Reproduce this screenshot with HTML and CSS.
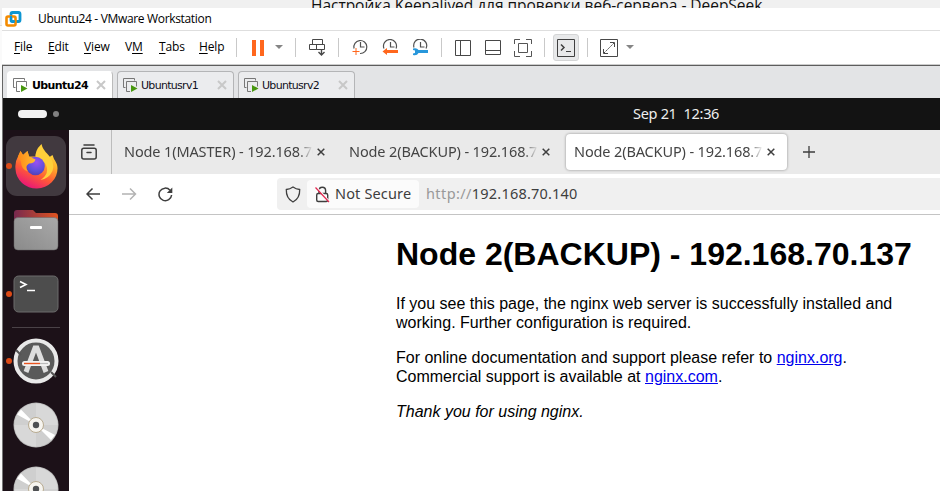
FILE: index.html
```html
<!DOCTYPE html>
<html lang="en">
<head>
<meta charset="utf-8">
<title>Ubuntu24 - VMware Workstation</title>
<link rel="stylesheet" href="styles.css">
</head>
<body>
<svg width="0" height="0" class="defs">
  <defs>
    <linearGradient id="fox" x1="0.8" y1="0" x2="0.3" y2="1"><stop offset="0" stop-color="#ffe947"/><stop offset=".35" stop-color="#ffae28"/><stop offset=".65" stop-color="#ff5b35"/><stop offset="1" stop-color="#e8127c"/></linearGradient>
    <radialGradient id="globe" cx=".55" cy=".3" r=".8"><stop offset="0" stop-color="#9a50f2"/><stop offset=".6" stop-color="#5b50d8"/><stop offset="1" stop-color="#5537a5"/></radialGradient>
    <linearGradient id="ear"><stop offset="0" stop-color="#ff8a18"/><stop offset="1" stop-color="#ffbd32"/></linearGradient>
    <linearGradient id="folder"><stop offset="0" stop-color="#77294f"/><stop offset="1" stop-color="#e05420"/></linearGradient>
    <linearGradient id="front" x1="0" y1="1" x2="1" y2="0"><stop offset="0" stop-color="#8a8a8a"/><stop offset="1" stop-color="#a9a9a9"/></linearGradient>
    <symbol id="vmtab" viewBox="0 0 15 15"><path d="M2.500 9.500H.5V.5h11v2" fill="none" stroke="#777"/><path d="M7 13.500H3.500V3.500h10v5" fill="none" stroke="#777"/><path d="M8 7l6.500 3.500L8 14z" fill="#47960f"/></symbol>
    <symbol id="close" viewBox="0 0 10 10"><path d="M1 1l8 8M9 1L1 9" fill="none" stroke="#c8c8c8" stroke-width="2"/></symbol>
    <symbol id="fxclose" viewBox="0 0 8 8"><path d="M.7.700l6.600 6.600M7.300.700L.7 7.300" fill="none" stroke="#3e3e3e" stroke-width="1.500"/></symbol>
    <symbol id="caret" viewBox="0 0 8 4"><path d="M0 0h8L4 4z" fill="#858585"/></symbol>
    <symbol id="disc" viewBox="0 0 46 46">
      <circle cx="23" cy="23" r="22.500" fill="#b7b7b7"/><circle cx="23" cy="23" r="21.700" fill="#cfcfcf"/>
      <path d="M23 23V1.500A21.500 21.500 0 0 1 44.500 23zM23 23v21.500A21.500 21.500 0 0 1 1.500 23z" fill="#d8d8d8"/>
      <path d="M23 23L4 12.500l4-5zM23 23l15 15 4-5z" fill="#fff"/>
      <circle cx="23" cy="23" r="7.500" fill="#f6f4ef" stroke="#b8ab91"/><circle cx="23" cy="23" r="3.200" fill="#4e5053"/>
    </symbol>
  </defs>
</svg>
<div class="behind"><span>Настройка Keepalived для проверки веб-сервера - DeepSeek</span></div>
<div class="window">
  <header class="title">
    <svg width="18" height="17" viewBox="0 0 18 17"><rect x="6" y="2.500" width="9" height="9" rx="1.500" fill="none" stroke="#0e96d2" stroke-width="2.800"/><rect x="1.500" y="6.500" width="9" height="9" rx="1.500" fill="none" stroke="#f38b00" stroke-width="2.600"/><path d="M6 6V10.500q0 1 1 1h3" fill="none" stroke="#0e96d2" stroke-width="2"/></svg>
    <span>Ubuntu24 - VMware Workstation</span>
  </header>
  <nav class="toolbar">
    <span><u>F</u>ile</span><span><u>E</u>dit</span><span><u>V</u>iew</span><span>V<u>M</u></span><span><u>T</u>abs</span><span><u>H</u>elp</span>
    <i class="sep"></i>
    <svg width="12" height="16"><path d="M0 0h4v16H0zM8 0h4v16H8z" fill="#ff671d"/></svg>
    <svg width="8" height="4" class="down"><use href="#caret"/></svg>
    <i class="sep"></i>
    <svg width="17" height="17" fill="none" stroke="#474747"><path d="M3.500.500h10v5h-10zM.5 5.500h7v5h-7zM7.500 10.500v-5h8v5z"/><path d="M12.500 10v6M9.500 13l3 3 3-3" stroke-width="1.400"/></svg>
    <i class="sep"></i>
    <svg width="16" height="17"><path d="M2 9.500A6.500 6.500 0 1 1 8 14.500M8.500 3v5h4" fill="none" stroke="#515151" stroke-width="1.200"/><path d="M.5 12.500h7M4 9v7" stroke="#ff671d"/></svg>
    <svg width="17" height="17"><path d="M2 9.500A6.500 6.500 0 1 1 14 9.500M8.500 3v5h4" fill="none" stroke="#515151" stroke-width="1.200"/><path d="M5 9v2h11v3H5v2L.5 12.500z" fill="#ff671d"/></svg>
    <svg width="17" height="17"><path d="M2 8.500A6.500 6.500 0 1 1 14 9.500M8.500 3v5h4" fill="none" stroke="#515151" stroke-width="1.200"/><path d="M1 9.500q4-1 5.500 1.500H16v3H6.500q-1.500 3-5.500 2v-1.500l2-.5v-2.500l-2-.5z" fill="#2797db"/></svg>
    <i class="sep"></i>
    <svg width="16" height="16" fill="none" stroke="#474747"><path d="M.5.500h15v15H.5zM5.500.500v15"/></svg>
    <svg width="16" height="16" fill="none" stroke="#474747"><path d="M.5.500h15v14H.5zM.5 10.500h15"/></svg>
    <svg width="18" height="18" fill="none" stroke="#555"><path d="M.5 5V.500H6M12 .500h5.500V5M.5 12v5.500H6M12 17.500h5.500V12M4.500 4.500h9v9h-9z"/></svg>
    <i class="sep"></i>
    <span class="pressed"><svg width="18" height="18" fill="none" stroke="#404040"><path d="M.5.500h17v17H.5zM9 12.500h5"/><path d="M4 5.500l3 3-3 3" stroke-width="1.500"/></svg></span>
    <i class="sep"></i>
    <svg width="18" height="18" fill="none" stroke="#484848"><path d="M.5.500h17v17H.5zM10 3.500h4.500V8M3.500 10v4.500H8"/><path d="M4 14L14 4" stroke-dasharray="2 1"/></svg>
    <svg width="8" height="4" class="down"><use href="#caret"/></svg>
  </nav>
  <div class="vmtabs">
    <div class="vmtab on"><svg width="15" height="15"><use href="#vmtab"/></svg><span>Ubuntu24</span><svg width="10" height="10"><use href="#close"/></svg></div>
    <div class="vmtab"><svg width="15" height="15"><use href="#vmtab"/></svg><span>Ubuntusrv1</span><svg width="10" height="10"><use href="#close"/></svg></div>
    <div class="vmtab"><svg width="15" height="15"><use href="#vmtab"/></svg><span>Ubuntusrv2</span><svg width="10" height="10"><use href="#close"/></svg></div>
  </div>
  <div class="guest">
    <div class="topbar"><i class="pill"></i><i class="ws"></i><span>Sep 21&nbsp; 12:36</span></div>
    <div class="desk">
      <aside class="dock">
        <div class="app focus"><i class="dot"></i>
          <svg width="44" height="46" viewBox="0 0 44 46">
            <path d="M4 13.500L6.500 8l2.500 4 4.500-4 1.500 5.500 8 0q0-4 4.500-10l2 5 6 5.500 3-2 1.500 4q3.500 5 3.500 9A20.500 19.500 0 0 1 1.500 26q-.8-7 2.500-12.500z" fill="url(#fox)"/>
            <path d="M27.500 1q1 5 6 10 8 8 5 17-4 8-12 9 10-7 5-16-3-4-10-4.500Q20 8 27.500 1z" fill="#ffd03a"/>
            <circle cx="21.500" cy="23" r="9.300" fill="url(#globe)"/>
            <path d="M4 13.500L6.500 8l2.500 4 4.500-4 1.500 5.500 6.500 3q-1 4-6.500 4-5 3-1 8-7-2-7-10z" fill="url(#ear)"/>
          </svg></div>
        <div class="app"><svg width="46" height="42" viewBox="0 0 46 42"><path d="M1 10V4q0-3 3-3h16l3 3h19q3 0 3 3v12H1z" fill="url(#folder)"/><rect x="1" y="8.500" width="44" height="32.500" rx="4" fill="url(#front)" stroke="#666" stroke-width=".5"/><rect x="17" y="17" width="12" height="3" rx="1" fill="#fff"/></svg></div>
        <div class="app"><i class="dot"></i><svg width="46" height="38" viewBox="0 0 46 38"><rect x="1" y="1" width="44" height="36" rx="4.500" fill="#4d4d4d" stroke="#6c6c6c"/><path d="M7 6.500l6 3-6 3M14 15.500h8" fill="none" stroke="#fff" stroke-width="1.600"/></svg></div>
        <i class="line"></i>
        <div class="app"><i class="dot"></i><svg width="46" height="46" viewBox="0 0 46 46"><circle cx="23" cy="23" r="20.500" fill="#5a5a5a" stroke="#e9e9e9" stroke-width="4"/><path d="M3 12l5 5M38 34l5 5" stroke="#555" stroke-width="2"/><path d="M13 34l9-24h2l9 24" fill="none" stroke="#dedede" stroke-width="5"/><rect x="9" y="23" width="28" height="5" rx="2.500" fill="#f2f2f2"/><path d="M11 25.500h16" stroke="#e95420" stroke-width="1.400"/><path d="M27 25.500h8" stroke="#bbb" stroke-width="1.200"/></svg></div>
        <div class="app"><svg width="46" height="46"><use href="#disc"/></svg></div>
        <div class="app"><svg width="46" height="46"><use href="#disc"/></svg></div>
      </aside>
      <main class="browser">
        <div class="tabs">
          <div class="recent"><svg width="16" height="16" fill="none" stroke="#3e3e3e" stroke-width="1.500"><rect x=".8" y="4.200" width="14.400" height="10.800" rx="2"/><path d="M3 .900h10M6 8.500h4" stroke-linecap="round"/></svg></div>
          <div class="tab"><span>Node 1(MASTER) - 192.168.70</span><svg width="8" height="8"><use href="#fxclose"/></svg></div>
          <div class="tab"><span>Node 2(BACKUP) - 192.168.70</span><svg width="8" height="8"><use href="#fxclose"/></svg></div>
          <div class="tab active"><span>Node 2(BACKUP) - 192.168.70</span><svg width="8" height="8"><use href="#fxclose"/></svg></div>
          <svg class="plus" width="12" height="12"><path d="M6 0v12M0 6h12" stroke="#3e3e3e" stroke-width="1.300"/></svg>
        </div>
        <div class="nav">
          <svg width="15" height="14" fill="none" stroke="#3e3e3e" stroke-width="1.500"><path d="M14 7H1.200M6.500 1.500L1 7l5.500 5.500"/></svg>
          <svg width="15" height="14" fill="none" stroke="#b3b3b3" stroke-width="1.500"><path d="M0 7h13.300M8 1.500L13.500 7 8 12.500"/></svg>
          <svg width="15" height="15" fill="none" stroke="#3e3e3e" stroke-width="1.500"><path d="M13.600 8A6.300 6.300 0 1 1 12 3.200"/><path d="M14.300.500v5.500H8.800z" fill="#3e3e3e" stroke="none"/></svg>
          <div class="url">
            <svg width="16" height="17" fill="none" stroke="#3e3e3e" stroke-width="1.300"><path d="M8 1q3 2.300 6.700 2.500.3 9-6.700 12.500Q1 12.500 1.300 3.500 5 3.300 8 1z"/></svg>
            <div class="ident"><svg width="15" height="17" fill="none" stroke="#3e3e3e" stroke-width="1.400"><rect x="1.700" y="7.500" width="11" height="8" rx="1.500"/><path d="M4 7.500V4.500a3.300 3.300 0 0 1 6.600 0v3"/><path d="M1 .5l13.500 15" stroke="#fbfbfb" stroke-width="1.500"/><path d="M.5 1.500l13.500 14.500" stroke="#e22850" stroke-width="1.200"/></svg><span>Not Secure</span></div>
            <span class="addr"><b>http://</b>192.168.70.140</span>
          </div>
        </div>
        <article class="page">
          <h1>Node 2(BACKUP) - 192.168.70.137</h1>
          <p>If you see this page, the nginx web server is successfully installed and<br>working. Further configuration is required.</p>
          <p>For online documentation and support please refer to <a href="#">nginx.org</a>.<br>Commercial support is available at <a href="#">nginx.com</a>.</p>
          <p><em>Thank you for using nginx.</em></p>
        </article>
      </main>
    </div>
  </div>
</div>
</body>
</html>
```
FILE: styles.css
```css
* { box-sizing: border-box; }
body { margin: 0; width: 940px; height: 491px; overflow: hidden; background: linear-gradient(#f0f0f0 25px, #dcdcdc 25px, #dcdcdc 26px, #fafafa 26px); }
svg { display: block; flex: none; }
i { display: block; flex: none; }
.defs { position: absolute; }
.behind { height: 8px; padding-left: 311px; overflow: hidden; font: 15.5px/20px "Open Sans", sans-serif; color: #111; white-space: nowrap; background: #f0f0f0; }
.behind span { display: block; margin-top: -5px; letter-spacing: -.03px; }
.window { margin-left: 2px; height: 483px; background: #fff; }
.title { height: 23px; border-bottom: 1px solid #dedede; display: flex; padding: 2px 0 0 3px; font: 12px/17px "Open Sans", sans-serif; color: #000; }
.title span { margin-left: 15px; letter-spacing: -.33px; }
.toolbar { height: 34px; border-bottom: 1px solid #ccc; padding-left: 12px; display: grid; align-items: center; grid-template-columns: 34px 36px 41px 34px 40px 37px 16px 23px 20px 14px 29px 14px 30px 30px 29px 14px 30px 29px 30px 9px 34px 13px 26px 8px; font: 12px/16px "Open Sans", sans-serif; letter-spacing: -.15px; }
.toolbar > span:not(.pressed) { margin-top: -1px; }
.toolbar u { text-underline-offset: 2px; }
.sep { width: 1px; height: 19px; background: #c9c9c9; }
.down { margin-top: -1px; }
.pressed { width: 26px; height: 27px; border: 1px solid #d4d5d6; border-radius: 3px; background: #e8e9ea; display: grid; place-items: center; }
.vmtabs { height: 33px; border-top: 1px solid #5d5d5d; border-left: 1px solid #666; background: #e3e4e6; display: flex; gap: 4px; padding: 5px 0 0 4px; }
.vmtab { width: 117px; height: 27px; display: flex; align-items: center; border: 1px solid #b4b5b7; border-bottom: 0; border-radius: 4px 4px 0 0; background: #ebecee; padding: 0 6px 0 5px; font: 11px/14px "DejaVu Sans", sans-serif; color: #101020; }
.vmtab span { margin: 1px auto 0 3px; letter-spacing: -.7px; }
.vmtab.on { width: 106px; background: #fff; border-color: #fff #bbb #fff #fff; font-weight: bold; color: #000; }
.vmtab.on span { margin-left: 4px; letter-spacing: -.6px; }
.guest { border-left: 1px solid #777; }
.topbar { height: 32px; background: #131313; display: flex; align-items: center; padding-left: 15px; font: 14.5px/20px "Noto Sans", sans-serif; color: #eee; }
.pill { width: 29px; height: 8px; border-radius: 4px; background: #f2f2f2; }
.ws { width: 6px; height: 6px; border-radius: 50%; background: #808080; margin-left: 6px; }
.topbar span { margin: -3px 0 0 574px; letter-spacing: -.3px; }
.desk { display: flex; height: 361px; }
.dock { width: 66px; flex: none; overflow: hidden; background: #1c1118; }
.app { position: relative; height: 64px; display: grid; place-items: center; }
.app.focus { width: 60px; height: 60px; margin: 6px 0 2px 3px; border-radius: 11px; background: #41393f; }
.dot { position: absolute; left: 3px; top: 29px; width: 6px; height: 6px; border-radius: 50%; background: #dc4a16; }
.focus .dot { left: 0; top: 27px; }
.line { width: 48px; height: 1px; margin: 1px 9px; background: #4a4247; }
.browser { flex: 1; min-width: 0; background: #fff; }
.tabs { height: 44px; background: #eaeaea; display: flex; align-items: center; font: 14.5px/20px "Noto Sans", sans-serif; color: #444; }
.recent { width: 43px; height: 44px; border-right: 1px solid #bcbcbc; padding: 14px 0 0 12px; }
.tab { width: 221px; height: 36px; margin-left: 4px; padding-left: 8px; border-radius: 4px; display: flex; align-items: center; white-space: nowrap; }
.tab span { width: 189px; overflow: hidden; margin: -2px 4px 0 0; letter-spacing: -.13px; -webkit-mask-image: linear-gradient(90deg, #000 174px, transparent 189px); mask-image: linear-gradient(90deg, #000 174px, transparent 189px); }
.active { background: #fff; box-shadow: 0 0 3px rgba(0,0,0,.4); }
.plus { margin-left: 16px; }
.nav { height: 41px; border-bottom: 1px solid #c4c4c4; display: flex; align-items: center; padding-left: 17px; }
.nav > svg { margin-right: 21px; }
.url { flex: 1; margin-left: 83px; height: 32px; border-radius: 4px 0 0 4px; background: #f0f0f0; display: flex; align-items: center; padding-left: 8px; font: 14.5px/20px "Noto Sans", sans-serif; color: #3e3e3e; white-space: nowrap; }
.ident { width: 112px; height: 28px; margin-left: 6px; padding-left: 8px; border-radius: 4px; background: #fbfbfb; display: flex; align-items: center; }
.ident span { margin: -2px 0 0 5px; letter-spacing: .15px; }
.addr { margin: -2px 0 0 7px; letter-spacing: .2px; }
.addr b { font-weight: normal; color: #999; letter-spacing: .4px; }
.page { width: 560px; margin: 21px 0 0 327px; font: 16px/19px "Liberation Sans", sans-serif; color: #000; white-space: nowrap; }
.page h1 { margin: 0 0 21px; font-size: 32px; line-height: 37px; }
.page p { margin: 0 0 16px; }
.page a { color: #0000ee; }
```
